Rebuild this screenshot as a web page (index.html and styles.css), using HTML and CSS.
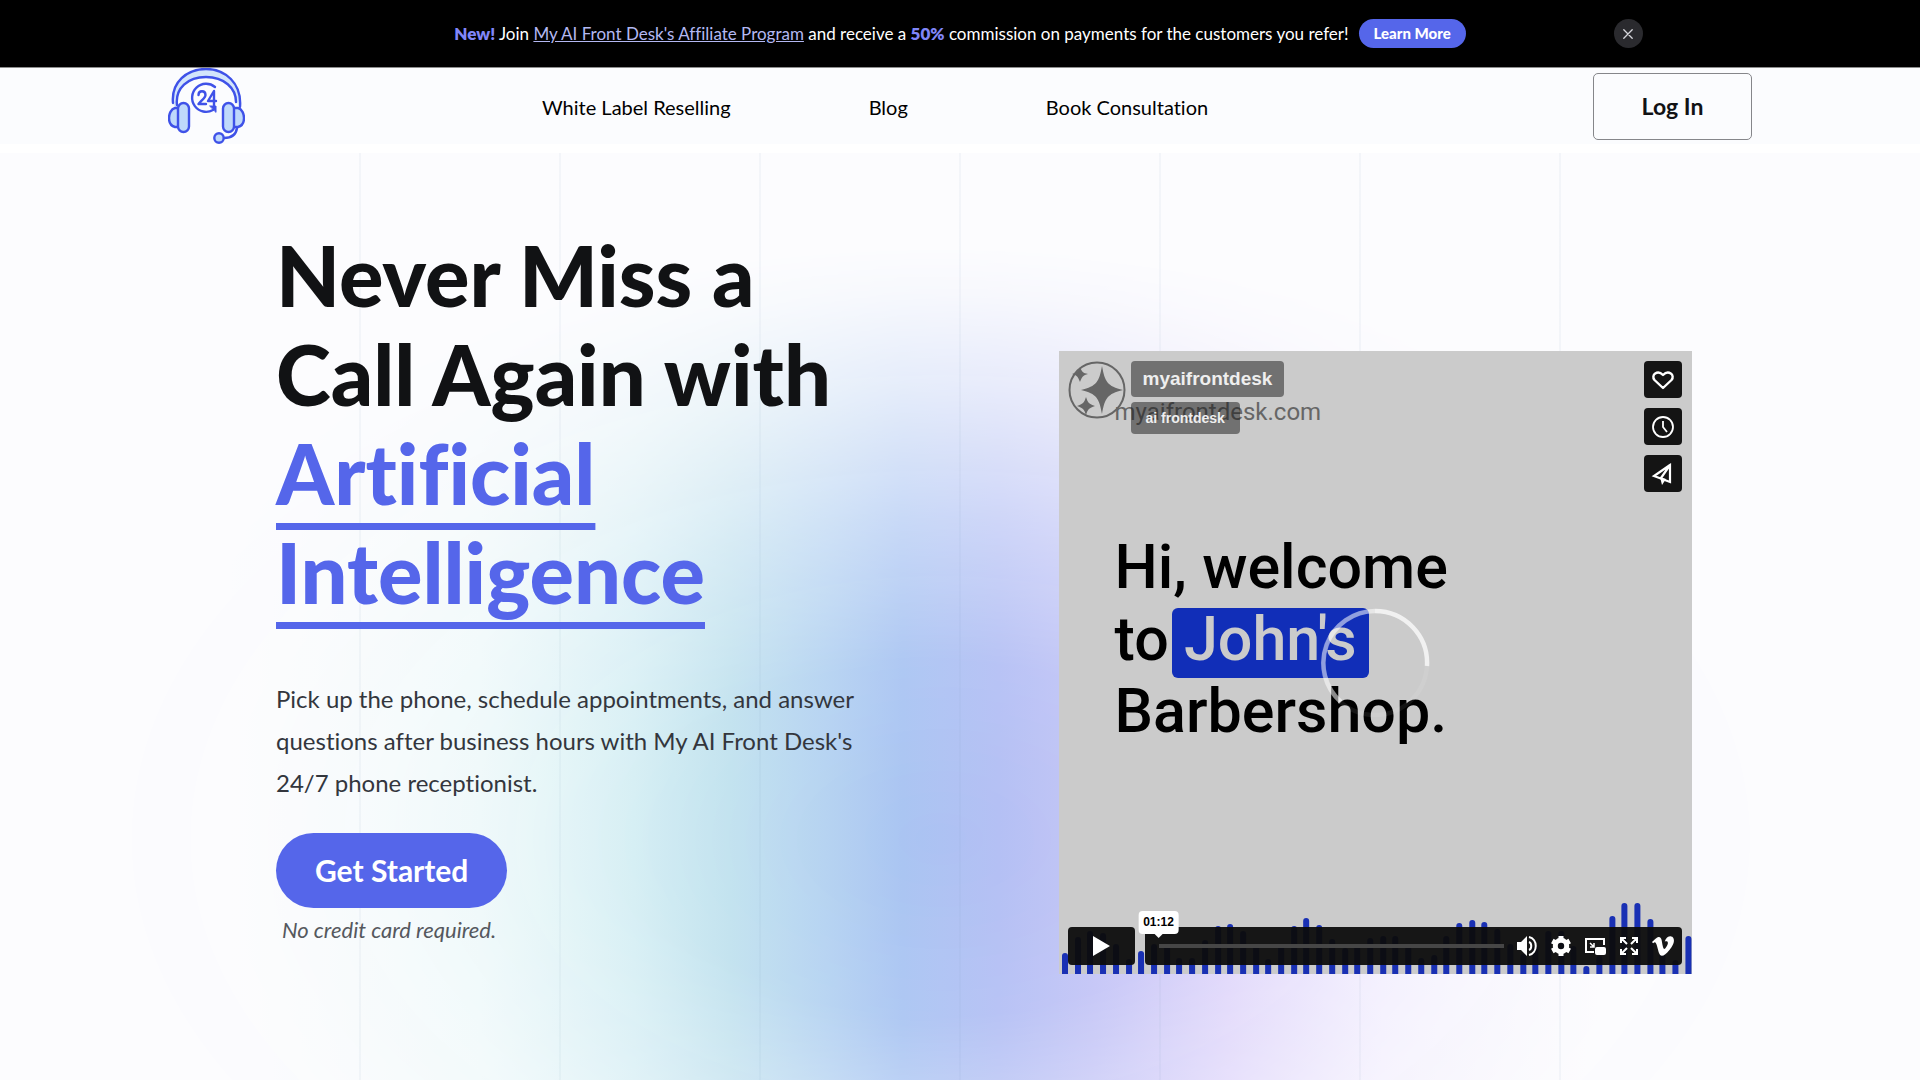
FILE: index.html
```html
<!DOCTYPE html>
<html lang="en">
<head>
<meta charset="utf-8">
<meta name="viewport" content="width=device-width, initial-scale=1">
<title>My AI Front Desk</title>
<link rel="stylesheet" href="styles.css">
</head>
<body>
<aside class="banner" aria-label="Announcement">
  <div class="banner-message">
    <p class="banner-text"><strong>New!</strong> Join <a href="#affiliate">My AI Front Desk's Affiliate Program</a> and receive a <strong>50%</strong> commission on payments for the customers you refer!</p>
    <a class="banner-cta" href="#learn-more">Learn More</a>
  </div>
  <button class="banner-close" type="button" aria-label="Dismiss">
    <svg viewBox="0 0 10 10" width="10" height="10" fill="none" stroke="currentColor" stroke-width="1.3" stroke-linecap="round"><path d="M.8.8 9.2 9.2M9.2.8.8 9.2"/></svg>
  </button>
</aside>

<header class="site-header">
  <a class="logo" href="#home" aria-label="My AI Front Desk home">
    <svg viewBox="0 0 77 77" width="77" height="77" fill="none" stroke="#3f52e8" stroke-width="2.4" stroke-linecap="round" stroke-linejoin="round">
      <path d="M5 35C3 15 18 1 38 1s36 15 34 40l-3-7C67 19 56 9 38 9S9 20 10 38l-2 3" fill="#d3e5fb" stroke="none"/>
      <path d="M5 35C3 14 19 1 38 1s36 14 34 38M9 37C7 20 20 9 38 9s30 11 30 25"/>
      <path d="M11 40H7c-4 1-6 6-6 10s2 8 6 9h4M66 40h4c4 1 6 6 6 10s-2 8-6 9h-4" fill="#bfd9fb"/>
      <rect x="10" y="35" width="11" height="29" rx="5.500" fill="#bfd9fb"/>
      <rect x="55" y="35" width="11" height="29" rx="5.500" fill="#bfd9fb"/>
      <circle cx="51" cy="70" r="4.700" fill="#bfd9fb"/>
      <path d="M56 70c7 0 12-3 13-10"/>
      <path d="M47 19a14 14 0 1 0-2 23"/>
      <path d="M42 38h6v6z" fill="#3f52e8" stroke-width="1"/>
      <path d="M30.500 27c0-5 7-5 7 0 0 3-4 5-7 9h7.500M46 37V23l-6 10h8"/>
    </svg>
  </a>
  <nav class="site-nav" aria-label="Main">
    <a href="#white-label">White Label Reselling</a>
    <a href="#blog">Blog</a>
    <a href="#consultation">Book Consultation</a>
  </nav>
  <a class="login" href="#login">Log In</a>
</header>

<main class="hero">
  <div class="hero-copy">
    <h1>Never Miss a<br>Call Again with<br><em>Artificial<br>Intelligence</em></h1>
    <p class="lead">Pick up the phone, schedule appointments, and answer<br>questions after business hours with My AI Front Desk's<br>24/7 phone receptionist.</p>
    <a class="get-started" href="#get-started">Get Started</a>
    <p class="note">No credit card required.</p>
  </div>

  <section class="player" aria-label="Video player">
    <p class="watermark">myaifrontdesk.com</p>
    <p class="caption"><span>Hi, welcome</span><span>to <mark>John's</mark></span><span>Barbershop.</span></p>
    <svg class="wave" viewBox="0 0 633 72" preserveAspectRatio="none" fill="none" stroke="#1930b4" stroke-width="6" stroke-linecap="round">
      <path d="M6 78V54M19 78V38M31 78V32M44 78V34M57 78V45M70 78V60M82 78V52M95 78V45M108 78V47M120 78V59M133 78V59M146 78V41M159 78V27M171 78V25M184 78V32M197 78V45M209 78V60M222 78V45M235 78V27M247 78V19M260 78V26M273 78V40M286 78V49M298 78V47M311 78V39M324 78V37M336 78V37M349 78V47M362 78V59M375 78V56M387 78V37M400 78V24M413 78V21M425 78V23M438 78V30M451 78V45M464 78V55M476 78V47M489 78V32M502 78V32M514 78V47M527 78V67M540 78V57M553 78V17M565 78V4M578 78V4M591 78V20M603 78V54M616 78V61M629 78V37"/>
    </svg>
    <svg class="loader" viewBox="0 0 110 110" width="110" height="110" fill="none" stroke="#fff" stroke-width="4.500">
      <circle cx="55" cy="55" r="52" opacity=".08"/>
      <path d="M107 58A52 52 0 0 0 55 3" opacity=".7"/>
      <path d="M55 3A52 52 0 0 0 21 94" opacity=".5"/>
    </svg>
    <div class="byline">
      <svg viewBox="0 0 58 58" width="58" height="58" fill="#666">
        <circle cx="29" cy="29" r="27.500" fill="none" stroke="#666" stroke-width="2"/>
        <path d="M34 5c3 16 5 20 21 24-16 4-18 8-21 24-3-16-5-20-21-24 16-4 18-8 21-24ZM12 6c2 5 3 6 8 7-5 1-6 3-8 8-2-5-3-7-8-8 5-1 6-2 8-7ZM18 36c2 6 3 7 9 9-6 2-7 3-9 9-2-6-3-7-9-9 6-2 7-3 9-9Z"/>
      </svg>
      <div class="byline-text">
        <a class="video-title" href="#video">myaifrontdesk</a>
        <a class="video-author" href="#author">ai frontdesk</a>
      </div>
    </div>
    <div class="actions">
      <button type="button" aria-label="Like"><svg viewBox="0 0 24 24" width="24" height="24" fill="none" stroke="#fff" stroke-width="2.400" stroke-linejoin="round"><path d="M12 20 3.500 12C-.5 7 6.500 1.500 12 7c5.500-5.500 12.500 0 8.500 5Z"/></svg></button>
      <button type="button" aria-label="Watch later"><svg viewBox="0 0 24 24" width="24" height="24" fill="none" stroke="#fff" stroke-width="1.800"><circle cx="12" cy="12" r="10"/><path d="M12 6v6l4 5"/></svg></button>
      <button type="button" aria-label="Share"><svg viewBox="0 0 24 24" width="24" height="24" fill="none" stroke="#fff" stroke-width="2.200"><path d="M19 3 3 14l16 6ZM19 3l-9 13"/><path d="m9 15 2 8 4-6Z" fill="#fff" stroke="none"/></svg></button>
    </div>
    <div class="controls">
      <button class="play" type="button" aria-label="Play"><svg viewBox="0 0 18 20" width="18" height="20" fill="#fff"><path d="M1 0v20l17-10Z"/></svg></button>
      <div class="control-bar">
        <div class="track"><span class="time">01:12</span></div>
        <button type="button" aria-label="Volume"><svg viewBox="0 0 22 22" width="22" height="22" fill="#fff"><path d="M1 7h4l6-6v20l-6-6H1Z"/><path d="M13 7c3 1 3 7 0 8M13 2c9 2 9 16 0 18" fill="none" stroke="#fff" stroke-width="2"/></svg></button>
        <button type="button" aria-label="Settings"><svg viewBox="0 0 22 22" width="22" height="22"><circle cx="11" cy="11" r="5.700" fill="none" stroke="#fff" stroke-width="5"/><g stroke="#fff" stroke-width="5"><path d="M11 1v4M11 17v4M2.300 6l3.500 2M16.200 14l3.500 2M2.300 16l3.500-2M16.200 8l3.500-2"/></g></svg></button>
        <button type="button" aria-label="Picture in picture"><svg viewBox="0 0 22 22" width="22" height="22" fill="none" stroke="#fff" stroke-width="2"><path d="M10 17H2V4h18v6"/><path d="M6 8l4 4M10 8v4H6" stroke-width="1.500"/><rect x="12" y="13" width="9" height="6" rx="1" fill="#fff"/></svg></button>
        <button type="button" aria-label="Fullscreen"><svg viewBox="0 0 22 22" width="22" height="22" fill="none" stroke="#fff" stroke-width="2"><path d="M8 3H3v5M14 3h5v5M8 19H3v-5M14 19h5v-5M3 3l6 6M19 3l-6 6M3 19l6-6M19 19l-6-6"/></svg></button>
        <button type="button" aria-label="Vimeo"><svg viewBox="0 0 24 24" width="22" height="22" fill="#fff"><path d="M23.900 6.700c-.1 2.300-1.700 5.500-4.900 9.600-3.200 4.200-6 6.300-8.200 6.300-1.400 0-2.600-1.300-3.500-3.900L5.400 11.700C4.700 9.200 3.900 7.900 3.100 7.900c-.2 0-.8.4-1.900 1.100L0 7.500C1.200 6.500 2.400 5.400 3.500 4.400 5.100 3 6.300 2.300 7.100 2.200c1.900-.2 3 1.100 3.500 3.800.5 2.900.8 4.800 1 5.500.5 2.500 1.100 3.700 1.800 3.700.5 0 1.300-.8 2.300-2.400s1.600-2.900 1.600-3.800c.1-1.500-.4-2.200-1.600-2.200-.6 0-1.200.1-1.800.4 1.200-3.900 3.500-5.800 6.900-5.700 2.200.2 3.300 1.900 3.100 5.200Z"/></svg></button>
      </div>
    </div>
  </section>
</main>
</body>
</html>
```
FILE: styles.css
```css
* { box-sizing: border-box; }

body {
  margin: 0;
  min-height: 100vh;
  display: flex;
  flex-direction: column;
  background: #fcfcfe;
  color: #111214;
  font-family: Lato, sans-serif;
  font-variant-ligatures: none;
}

p, h1 { margin: 0; }
a { color: inherit; text-decoration: none; }
button { padding: 0; border: 0; color: inherit; font: inherit; cursor: pointer; }
svg { display: block; }

/* Announcement */
.banner {
  display: grid;
  grid-template-columns: 1fr auto 1fr;
  align-items: center;
  height: 68px;
  background: #000;
  border-bottom: 1px solid #8d8d8d;
  color: #fff;
}
.banner-message { grid-column: 2; display: flex; align-items: center; gap: 10px; }
.banner-text { font-size: 17px; line-height: 24px; }
.banner-text strong { color: #8086f8; font-weight: 800; }
.banner-text a { color: #b3b8f2; text-decoration: underline; }
.banner-cta {
  padding: 0 15px;
  border-radius: 15px;
  background: #5566ea;
  font-size: 15px;
  font-weight: 900;
  line-height: 29px;
}
.banner-close {
  display: grid;
  place-items: center;
  width: 29px;
  height: 29px;
  margin-left: 148px;
  border-radius: 50%;
  background: #2a2a2e;
  color: #d5d5da;
}

/* Header */
.site-header {
  display: grid;
  grid-template-columns: 374fr 1051fr 159px;
  align-items: center;
  height: 76px;
  padding: 0 168px;
  background: #fbfcfe;
}
.site-nav { display: flex; gap: 138px; color: #000; font-size: 20px; line-height: 28px; }
.login {
  border: 1px solid #85868a;
  border-radius: 5px;
  font-size: 23px;
  font-weight: 700;
  line-height: 65px;
  text-align: center;
}

/* Hero */
.hero {
  position: relative;
  isolation: isolate;
  flex: 1;
  display: grid;
  grid-template-columns: 782fr 633fr;
  align-items: start;
  padding: 73px 228px 40px 276px;
  border-top: 9px solid #fff;
}
.hero::before {
  content: "";
  position: absolute;
  inset: 0;
  z-index: -2;
  background: linear-gradient(90deg, #fcfcfe 12%, #eaf8f8 25%, #d2edf3 33%, #c0e1ee 38%, #b4d2f1 43%, #a9c4f2 47%, #b3bff4 52%, #c3c4f6 57%, #ddd3fa 64%, #f0ebfd 72%, #fcfcfe 84%);
  -webkit-mask-image: radial-gradient(ellipse 50% 64% at 49% 74%, #000 0%, #000000ee 30%, #000000a0 54%, #00000040 78%, #00000010 92%, transparent 100%);
  mask-image: radial-gradient(ellipse 50% 64% at 49% 74%, #000 0%, #000000ee 30%, #000000a0 54%, #00000040 78%, #00000010 92%, transparent 100%);
}
.hero::after {
  content: "";
  position: absolute;
  inset: 0 300px;
  z-index: -1;
  background: linear-gradient(90deg, transparent 99px, #7090b010 99px, #7090b010 101px, transparent 101px) center top / 200px 100%;
}
.hero-copy { display: flex; flex-direction: column; align-items: flex-start; }
h1 { font-size: 83px; font-weight: 900; line-height: 99px; }
h1 em {
  color: #5566ea;
  font-style: normal;
  text-decoration: underline 7px;
  text-underline-offset: 18px;
  text-decoration-skip-ink: none;
}
.lead { margin-top: 56px; color: #33363d; font-size: 24px; line-height: 42px; }
.get-started {
  margin-top: 29px;
  padding: 0 39px;
  border-radius: 38px;
  background: #5566ea;
  color: #fff;
  font-size: 30px;
  font-weight: 700;
  line-height: 75px;
}
.note { margin: 8px 6px 0; color: #55585e; font-size: 22px; font-style: italic; line-height: 28px; }

/* Video player */
.player {
  position: relative;
  margin-top: 125px;
  aspect-ratio: 633 / 623;
  background: #cbcbcb;
  color: #000;
  overflow: hidden;
}
.watermark {
  position: absolute;
  top: 47px;
  left: 56px;
  color: #666;
  font: 24px/28px Roboto, sans-serif;
}
.caption {
  position: absolute;
  top: 180px;
  left: 56px;
  font: 500 61px/72px Roboto, sans-serif;
}
.caption span { display: block; height: 72px; white-space: nowrap; }
.caption mark {
  display: inline-block;
  margin-left: -12px;
  padding: 0 12px 8px;
  border-radius: 6px;
  background: #112eb8;
  color: #cbcbcb;
  line-height: 62px;
}
.wave { position: absolute; left: 0; bottom: 0; width: 100%; height: 72px; }
.loader { position: absolute; top: 50%; left: 50%; translate: -50% -50%; }

.byline { position: absolute; top: 10px; left: 9px; display: flex; gap: 5px; }
.byline-text {
  display: flex;
  flex-direction: column;
  align-items: flex-start;
  gap: 5px;
  color: #eee;
  font-family: "Liberation Sans", sans-serif;
  font-weight: 700;
}
.byline-text a { border-radius: 4px; background: #17171780; }
.video-title { padding: 0 12px; font-size: 19px; line-height: 36px; }
.video-author { padding: 0 15px; font-size: 14px; line-height: 32px; }

.actions { position: absolute; top: 10px; right: 10px; display: grid; gap: 10px; }
.actions button {
  display: grid;
  place-items: center;
  width: 38px;
  height: 37px;
  border-radius: 4px;
  background: #141414;
}

.controls { position: absolute; right: 10px; bottom: 9px; left: 9px; display: flex; gap: 10px; }
.play {
  display: grid;
  place-items: center;
  width: 67px;
  height: 38px;
  border-radius: 4px;
  background: #0c0c0cf2;
}
.control-bar {
  flex: 1;
  display: flex;
  align-items: center;
  gap: 12px;
  padding: 0 8px 0 14px;
  border-radius: 4px;
  background: #0c0c0cf2;
}
.control-bar button { background: none; }
.track { position: relative; flex: 1; height: 4px; background: #464646; }
.time {
  position: absolute;
  bottom: 14px;
  left: 0;
  translate: -50% 0;
  padding: 0 5px;
  border-radius: 4px;
  background: #fff;
  font: 700 12px/23px "Liberation Sans", sans-serif;
}
.time::after {
  content: "";
  position: absolute;
  top: 100%;
  left: 50%;
  translate: -50% 0;
  border: 4px solid transparent;
  border-top-color: #fff;
  border-bottom: 0;
}
```
